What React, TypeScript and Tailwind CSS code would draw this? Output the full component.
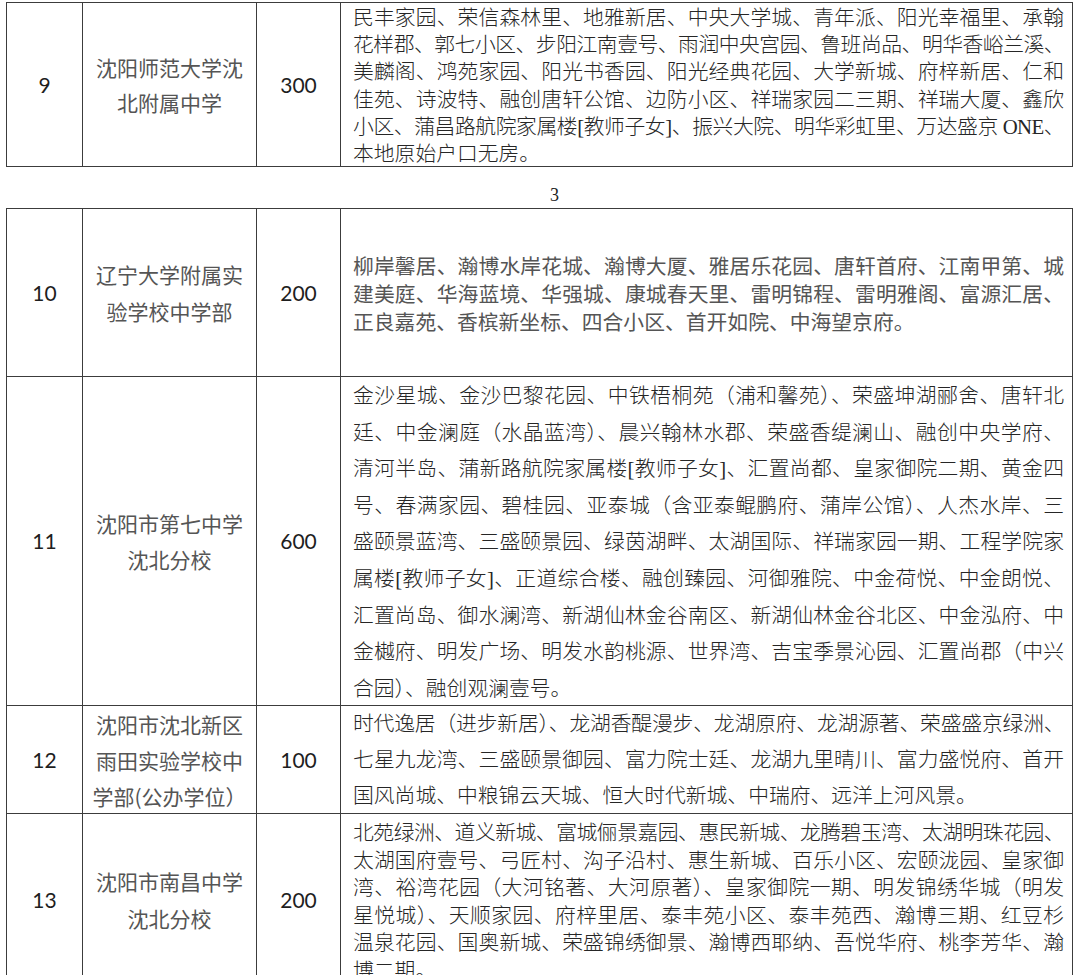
import React from "react";

type Row = {
  no: string;
  name: string[];
  quota: string;
  lines: string[];
  height: string;
  leading: string;
  nameLeading: string;
  align: string;
  pad: string;
  serif: boolean;
};

const rowsTop: Row[] = [
  {
    no: "9",
    name: ["沈阳师范大学沈", "北附属中学"],
    quota: "300",
    lines: [
      "民丰家园、荣信森林里、地雅新居、中央大学城、青年派、阳光幸福里、承翰",
      "花样郡、郭七小区、步阳江南壹号、雨润中央宫园、鲁班尚品、明华香峪兰溪、",
      "美麟阁、鸿苑家园、阳光书香园、阳光经典花园、大学新城、府梓新居、仁和",
      "佳苑、诗波特、融创唐轩公馆、边防小区、祥瑞家园二三期、祥瑞大厦、鑫欣",
      "小区、蒲昌路航院家属楼[教师子女]、振兴大院、明华彩虹里、万达盛京 ONE、",
      "本地原始户口无房。",
    ],
    height: "h-[163px]",
    leading: "leading-[27.2px]",
    nameLeading: "leading-[35px]",
    align: "justify-start",
    pad: "pt-[1px]",
    serif: true,
  },
];

const rowsBottom: Row[] = [
  {
    no: "10",
    name: ["辽宁大学附属实", "验学校中学部"],
    quota: "200",
    lines: [
      "柳岸馨居、瀚博水岸花城、瀚博大厦、雅居乐花园、唐轩首府、江南甲第、城",
      "建美庭、华海蓝境、华强城、康城春天里、雷明锦程、雷明雅阁、富源汇居、",
      "正良嘉苑、香槟新坐标、四合小区、首开如院、中海望京府。",
    ],
    height: "h-[168px]",
    leading: "leading-[28px]",
    nameLeading: "leading-[37px]",
    align: "justify-center",
    pad: "pt-0",
    serif: false,
  },
  {
    no: "11",
    name: ["沈阳市第七中学", "沈北分校"],
    quota: "600",
    lines: [
      "金沙星城、金沙巴黎花园、中铁梧桐苑（浦和馨苑）、荣盛坤湖郦舍、唐轩北",
      "廷、中金澜庭（水晶蓝湾）、晨兴翰林水郡、荣盛香缇澜山、融创中央学府、",
      "清河半岛、蒲新路航院家属楼[教师子女]、汇置尚都、皇家御院二期、黄金四",
      "号、春满家园、碧桂园、亚泰城（含亚泰鲲鹏府、蒲岸公馆）、人杰水岸、三",
      "盛颐景蓝湾、三盛颐景园、绿茵湖畔、太湖国际、祥瑞家园一期、工程学院家",
      "属楼[教师子女]、正道综合楼、融创臻园、河御雅院、中金荷悦、中金朗悦、",
      "汇置尚岛、御水澜湾、新湖仙林金谷南区、新湖仙林金谷北区、中金泓府、中",
      "金樾府、明发广场、明发水韵桃源、世界湾、吉宝季景沁园、汇置尚郡（中兴",
      "合园）、融创观澜壹号。",
    ],
    height: "h-[329px]",
    leading: "leading-[36.6px]",
    nameLeading: "leading-[36px]",
    align: "justify-start",
    pad: "pt-[1px]",
    serif: true,
  },
  {
    no: "12",
    name: ["沈阳市沈北新区", "雨田实验学校中", "学部(公办学位）"],
    quota: "100",
    lines: [
      "时代逸居（进步新居）、龙湖香醍漫步、龙湖原府、龙湖源著、荣盛盛京绿洲、",
      "七星九龙湾、三盛颐景御园、富力院士廷、龙湖九里晴川、富力盛悦府、首开",
      "国风尚城、中粮锦云天城、恒大时代新城、中瑞府、远洋上河风景。",
    ],
    height: "h-[108px]",
    leading: "leading-[36px]",
    nameLeading: "leading-[36px]",
    align: "justify-center",
    pad: "pt-0",
    serif: true,
  },
  {
    no: "13",
    name: ["沈阳市南昌中学", "沈北分校"],
    quota: "200",
    lines: [
      "北苑绿洲、道义新城、富城俪景嘉园、惠民新城、龙腾碧玉湾、太湖明珠花园、",
      "太湖国府壹号、弓匠村、沟子沿村、惠生新城、百乐小区、宏颐泷园、皇家御",
      "湾、裕湾花园（大河铭著、大河原著）、皇家御院一期、明发锦绣华城（明发",
      "星悦城）、天顺家园、府梓里居、泰丰苑小区、泰丰苑西、瀚博三期、红豆杉",
      "温泉花园、国奥新城、荣盛锦绣御景、瀚博西耶纳、吾悦华府、桃李芳华、瀚",
      "博二期。",
    ],
    height: "h-[173px]",
    leading: "leading-[27.6px]",
    nameLeading: "leading-[37px]",
    align: "justify-start",
    pad: "pt-[5px]",
    serif: true,
  },
];

// rough width of a line in em: full-width glyphs count 1, latin less
function lineEm(s: string) {
  let w = 0;
  for (const ch of s) {
    if (ch === " ") w += 0.25;
    else if (ch === "[" || ch === "]") w += 0.33;
    else if (/[A-Z]/.test(ch)) w += 0.7;
    else w += 1;
  }
  return w;
}

function TableRow({ row, last }: { row: Row; last: boolean }) {
  return (
    <div className={`flex ${row.height} ${last ? "" : "border-b border-[#3c3c3c]"}`}>
      <div className="w-[76px] shrink-0 border-r border-[#3c3c3c] flex items-center justify-center font-['Lato','Open_Sans',sans-serif] text-[21px] text-[#1e1e1e]">
        {row.no}
      </div>
      <div
        className={`w-[174px] shrink-0 border-r border-[#3c3c3c] flex flex-col items-center justify-center text-[21px] ${row.nameLeading} text-[#555] font-['Noto_Sans_CJK_SC',sans-serif]`}
      >
        {row.name.map((n, i) => (
          <div key={i}>{n}</div>
        ))}
      </div>
      <div className="w-[84px] shrink-0 border-r border-[#3c3c3c] flex items-center justify-center font-['Lato','Open_Sans',sans-serif] text-[21px] text-[#1e1e1e]">
        {row.quota}
      </div>
      <div
        className={`w-[731px] shrink-0 flex flex-col ${row.align} ${row.pad} pl-[12px] pr-[8px] overflow-hidden text-[20.8px] ${row.leading} ${
          row.serif
            ? "font-['Liberation_Serif','Noto_Sans_CJK_SC',serif] font-light text-[#262626]"
            : "font-['Noto_Sans_CJK_SC',sans-serif] text-[#555]"
        }`}
      >
        {row.lines.map((l, i) => (
          <div
            key={i}
            className={`whitespace-nowrap ${lineEm(l) > 34.1 ? "tracking-[-0.6px]" : ""} ${
              i < row.lines.length - 1 ? "text-justify [text-align-last:justify]" : "text-left"
            }`}
          >
            {l}
          </div>
        ))}
      </div>
    </div>
  );
}

export default function App() {
  return (
    <div className="w-[1080px] h-[975px] overflow-hidden bg-white pt-[2px] pl-[6px]">
      <div className="w-[1067px] border border-[#3c3c3c]">
        {rowsTop.map((r, i) => (
          <TableRow key={r.no} row={r} last={i === rowsTop.length - 1} />
        ))}
      </div>

      <div className="w-[1067px] flex justify-center pl-[30px] pt-[19px] pb-[4px] text-[18px] leading-[18px] text-[#222] font-['Liberation_Serif',serif]">
        3
      </div>

      <div className="w-[1067px] border-x border-t border-[#3c3c3c]">
        {rowsBottom.map((r) => (
          <TableRow key={r.no} row={r} last={false} />
        ))}
      </div>
    </div>
  );
}
